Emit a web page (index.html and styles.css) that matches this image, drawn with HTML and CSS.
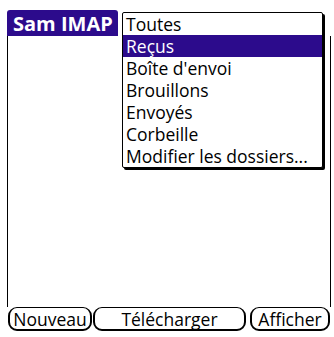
FILE: index.html
```html
<!DOCTYPE html>
<html>
<head>
<meta charset="utf-8">
<link rel="stylesheet" href="styles.css">
</head>
<body>
<div class="screen">
  <div class="titlebar"><div class="title">Sam IMAP</div></div>
  <div class="content"></div>
  <div class="buttons">
    <div class="btn btn-new">Nouveau</div>
    <div class="btn btn-dl">Télécharger</div>
    <div class="btn btn-show">Afficher</div>
  </div>
  <div class="popup">
    <div class="item">Toutes</div>
    <div class="item sel">Reçus</div>
    <div class="item">Boîte d'envoi</div>
    <div class="item">Brouillons</div>
    <div class="item">Envoyés</div>
    <div class="item">Corbeille</div>
    <div class="item">Modifier les dossiers...</div>
  </div>
</div>
</body>
</html>
```

FILE: styles.css
```css
html, body {
  margin: 0;
  padding: 0;
  background: #fff;
  width: 334px;
  height: 337px;
  overflow: hidden;
}
.screen {
  position: relative;
  width: 334px;
  height: 337px;
  box-sizing: border-box;
  padding: 10px 3px 6px 7px;
  display: flex;
  flex-direction: column;
  font-family: "Open Sans", "DejaVu Sans", sans-serif;
  color: #000;
}
.titlebar {
  height: 26px;
  display: flex;
}
.title {
  width: 111px;
  box-sizing: border-box;
  background: #2c0b8c;
  color: #fff;
  font-weight: bold;
  font-size: 20px;
  line-height: 27px;
  padding-left: 6px;
  border-radius: 3px 3px 0 0;
  white-space: nowrap;
}
.content {
  flex: 1;
  border-left: 1px solid #000;
  border-right: 1px solid #000;
}
.buttons {
  height: 24px;
  display: flex;
}
.btn {
  box-sizing: border-box;
  height: 24px;
  border: 2px solid #000;
  border-top-width: 1.5px;
  border-radius: 9px;
  display: flex;
  align-items: center;
  justify-content: center;
  font-size: 17.5px;
  font-weight: 500;
  white-space: nowrap;
}
.btn-new { margin-left: 1px; width: 84px; }
.btn-dl { margin-left: 1px; width: 153px; }
.btn-show { margin-left: 4px; width: 80px; }
.popup {
  position: absolute;
  left: 122px;
  top: 12px;
  width: 201px;
  box-sizing: border-box;
  background: #fff;
  border: 1px solid #000;
  border-radius: 2px;
  box-shadow: 2px 2px 0 #000;
}
.item {
  height: 22px;
  line-height: 22px;
  font-size: 17.5px;
  font-weight: 500;
  padding-left: 3px;
  white-space: nowrap;
}
.item.sel {
  background: #2c0b8c;
  color: #fff;
}
```
